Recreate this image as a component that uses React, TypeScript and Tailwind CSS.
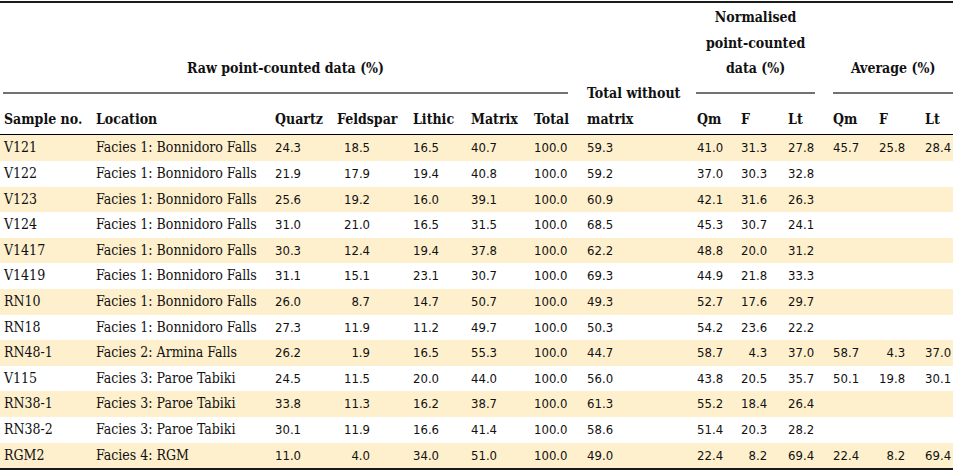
import React from 'react';

type Row = {
  id: string;
  location: string;
  raw: string[];
  noMatrix: string;
  norm: string[];
  avg?: string[];
};

const F1 = 'Facies 1: Bonnidoro Falls';
const F3 = 'Facies 3: Paroe Tabiki';

const rows: Row[] = [
  { id: 'V121', location: F1, raw: ['24.3', '18.5', '16.5', '40.7', '100.0'], noMatrix: '59.3', norm: ['41.0', '31.3', '27.8'], avg: ['45.7', '25.8', '28.4'] },
  { id: 'V122', location: F1, raw: ['21.9', '17.9', '19.4', '40.8', '100.0'], noMatrix: '59.2', norm: ['37.0', '30.3', '32.8'] },
  { id: 'V123', location: F1, raw: ['25.6', '19.2', '16.0', '39.1', '100.0'], noMatrix: '60.9', norm: ['42.1', '31.6', '26.3'] },
  { id: 'V124', location: F1, raw: ['31.0', '21.0', '16.5', '31.5', '100.0'], noMatrix: '68.5', norm: ['45.3', '30.7', '24.1'] },
  { id: 'V1417', location: F1, raw: ['30.3', '12.4', '19.4', '37.8', '100.0'], noMatrix: '62.2', norm: ['48.8', '20.0', '31.2'] },
  { id: 'V1419', location: F1, raw: ['31.1', '15.1', '23.1', '30.7', '100.0'], noMatrix: '69.3', norm: ['44.9', '21.8', '33.3'] },
  { id: 'RN10', location: F1, raw: ['26.0', '8.7', '14.7', '50.7', '100.0'], noMatrix: '49.3', norm: ['52.7', '17.6', '29.7'] },
  { id: 'RN18', location: F1, raw: ['27.3', '11.9', '11.2', '49.7', '100.0'], noMatrix: '50.3', norm: ['54.2', '23.6', '22.2'] },
  { id: 'RN48-1', location: 'Facies 2: Armina Falls', raw: ['26.2', '1.9', '16.5', '55.3', '100.0'], noMatrix: '44.7', norm: ['58.7', '4.3', '37.0'], avg: ['58.7', '4.3', '37.0'] },
  { id: 'V115', location: F3, raw: ['24.5', '11.5', '20.0', '44.0', '100.0'], noMatrix: '56.0', norm: ['43.8', '20.5', '35.7'], avg: ['50.1', '19.8', '30.1'] },
  { id: 'RN38-1', location: F3, raw: ['33.8', '11.3', '16.2', '38.7', '100.0'], noMatrix: '61.3', norm: ['55.2', '18.4', '26.4'] },
  { id: 'RN38-2', location: F3, raw: ['30.1', '11.9', '16.6', '41.4', '100.0'], noMatrix: '58.6', norm: ['51.4', '20.3', '28.2'] },
  { id: 'RGM2', location: 'Facies 4: RGM', raw: ['11.0', '4.0', '34.0', '51.0', '100.0'], noMatrix: '49.0', norm: ['22.4', '8.2', '69.4'], avg: ['22.4', '8.2', '69.4'] },
];

// column widths in px, left edge of each column sits 4px before its text
const widths = [92, 179, 62, 76, 58, 63, 53, 110, 44, 47, 45, 46, 46, 32];

const serif = "font-['DejaVu_Serif_Condensed','DejaVu_Serif',serif] [font-stretch:condensed]";
const sans = "font-['DejaVu_Sans_Condensed','DejaVu_Sans',sans-serif] [font-stretch:condensed] text-[13px]";

function Num({ v, shift }: { v?: string; shift?: boolean }) {
  if (!v) return null;
  return <span className={`inline-block w-[26px] text-right ${shift ? 'ml-[7px]' : ''}`}>{v}</span>;
}

export default function App() {
  const th = `${serif} text-[14px] font-bold text-left align-bottom pl-[4px] p-0 whitespace-nowrap`;
  const group = `${serif} text-[14px] font-bold p-0 pt-[2px] pb-[13px] align-bottom`;
  return (
    <div className="w-[953px] h-[476px] bg-white pt-px text-[#111]">
      <table className="border-collapse table-fixed w-[953px] leading-[25.6px]">
        <colgroup>
          {widths.map((w, i) => (
            <col key={i} style={{ width: w }} />
          ))}
        </colgroup>
        <thead>
          <tr className="border-t-2 border-[#1a1a1a]">
            <th colSpan={7} className={group}>
              <div className="ml-[3px] mr-[15px] border-b-2 border-[#727272] pb-[10px] text-center">
                Raw point-counted data (%)
              </div>
            </th>
            <th rowSpan={2} className={`${th} pb-[2px]`}>
              Total without
              <br />
              matrix
            </th>
            <th colSpan={3} className={group}>
              <div className="ml-[3px] mr-[14px] border-b-2 border-[#727272] pb-[10px] text-center">
                Normalised
                <br />
                point-counted
                <br />
                data (%)
              </div>
            </th>
            <th colSpan={3} className={group}>
              <div className="ml-[4px] border-b-2 border-[#727272] pb-[10px] text-center">Average (%)</div>
            </th>
          </tr>
          <tr className="border-b border-black">
            <th className={`${th} pb-[2px]`}>Sample no.</th>
            <th className={`${th} pb-[2px]`}>Location</th>
            <th className={`${th} pb-[2px]`}>Quartz</th>
            <th className={`${th} pb-[2px]`}>Feldspar</th>
            <th className={`${th} pb-[2px]`}>Lithic</th>
            <th className={`${th} pb-[2px]`}>Matrix</th>
            <th className={`${th} pb-[2px]`}>Total</th>
            <th className={`${th} pb-[2px]`}>Qm</th>
            <th className={`${th} pb-[2px]`}>F</th>
            <th className={`${th} pb-[2px]`}>Lt</th>
            <th className={`${th} pb-[2px]`}>Qm</th>
            <th className={`${th} pb-[2px]`}>F</th>
            <th className={`${th} pb-[2px]`}>Lt</th>
          </tr>
        </thead>
        <tbody className="border-b-2 border-[#1a1a1a]">
          {rows.map((r, i) => (
            <tr key={r.id} className={`h-[25.6px] ${i % 2 === 0 ? 'bg-[#fef0cd]' : 'bg-white'}`}>
              <td className={`${serif} text-[14px] pl-[4px] p-0 whitespace-nowrap`}>{r.id}</td>
              <td className={`${serif} text-[14px] pl-[4px] p-0 whitespace-nowrap`}>{r.location}</td>
              {r.raw.slice(0, 4).map((v, j) => (
                <td key={j} className={`${sans} pl-[4px] p-0`}>
                  <Num v={v} shift={j === 1} />
                </td>
              ))}
              <td className={`${sans} pl-[4px] p-0`}>{r.raw[4]}</td>
              <td className={`${sans} pl-[4px] p-0`}>{r.noMatrix}</td>
              {r.norm.map((v, j) => (
                <td key={j} className={`${sans} pl-[4px] p-0`}>
                  <Num v={v} />
                </td>
              ))}
              {[0, 1, 2].map((j) => (
                <td key={j} className={`${sans} pl-[4px] p-0`}>
                  <Num v={r.avg?.[j]} />
                </td>
              ))}
            </tr>
          ))}
        </tbody>
      </table>
    </div>
  );
}
